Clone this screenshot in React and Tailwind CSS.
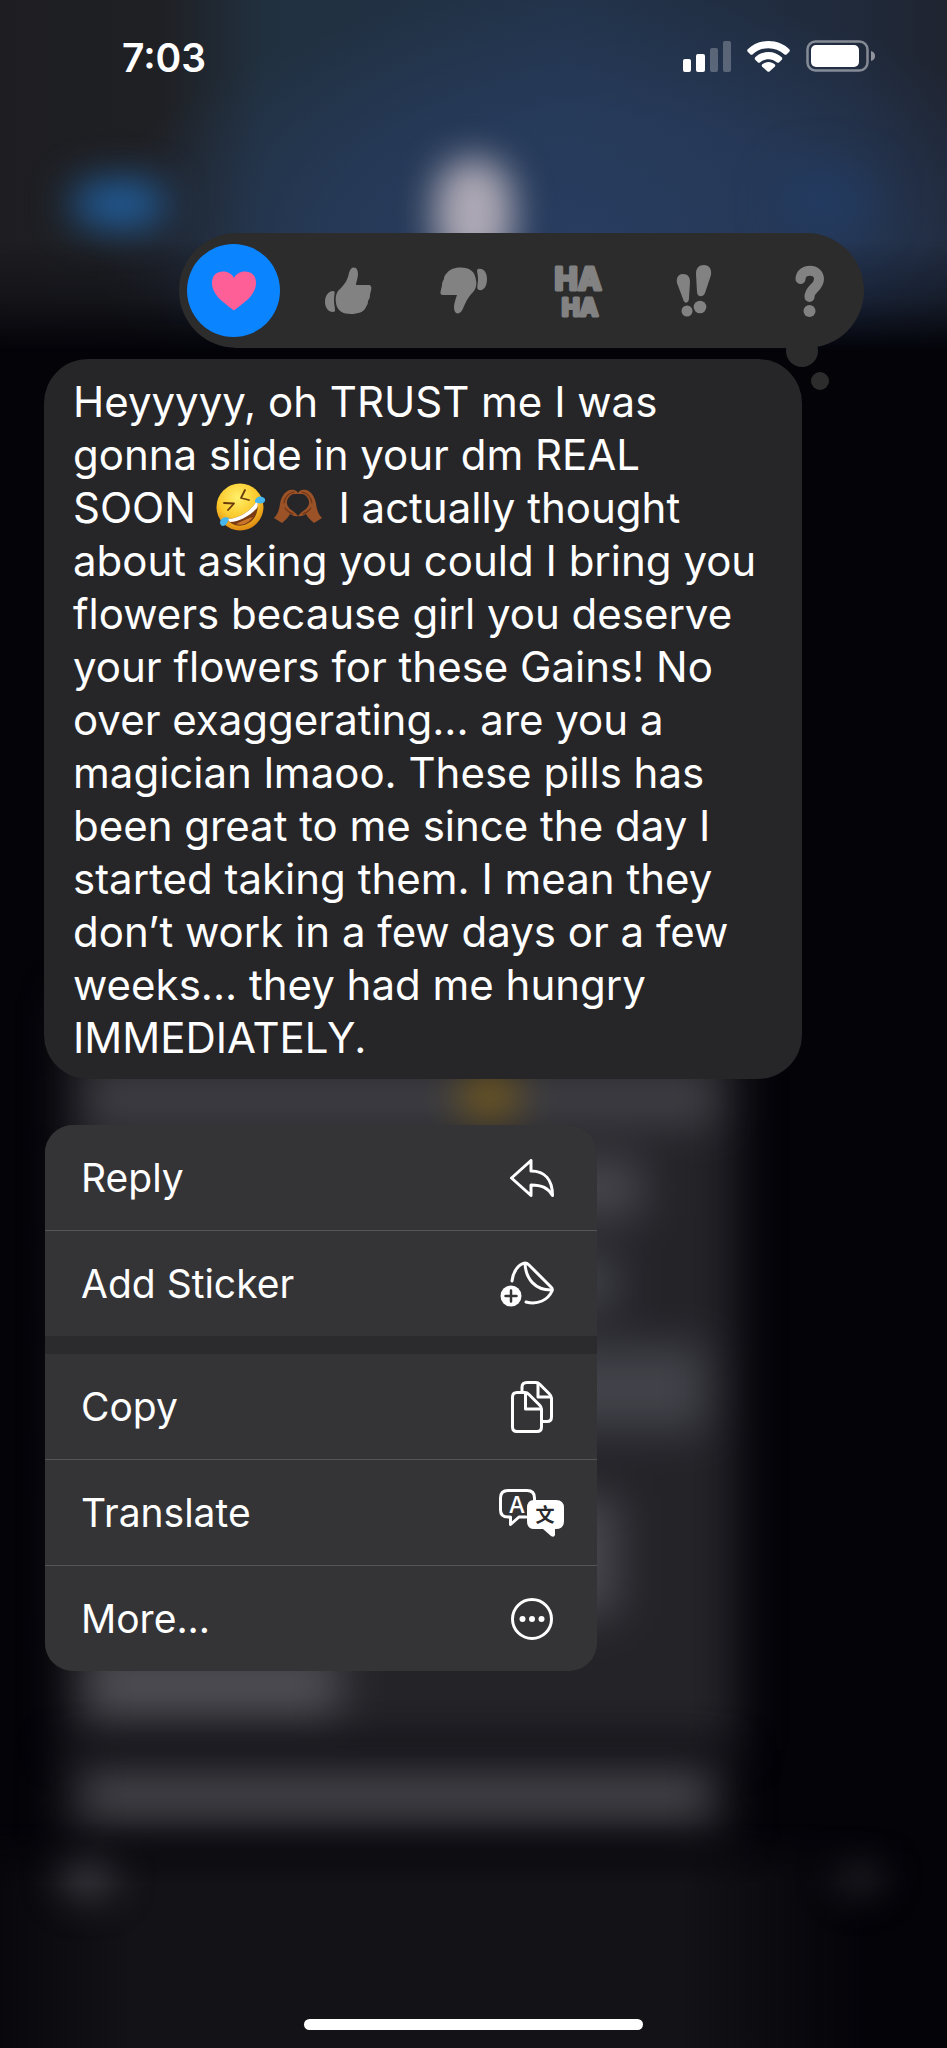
import React, { useState } from "react";

const LaughEmoji = () => (
  <svg viewBox="0 0 50 50" role="img" aria-label="rolling on the floor laughing" className="ml-2 inline-block size-[50px] align-[-9px]">
    <defs>
      <radialGradient id="face" cx="0.45" cy="0.3" r="0.75">
        <stop offset="0" stopColor="#fff06a" />
        <stop offset="0.55" stopColor="#fbc92c" />
        <stop offset="1" stopColor="#d97f0c" />
      </radialGradient>
    </defs>
    <circle cx="24" cy="25" r="23.5" fill="url(#face)" />
    <path d="M8 21 L18 21.5 L12 28" fill="none" stroke="#6b3a0a" strokeWidth="1.8" strokeLinecap="round" strokeLinejoin="round" />
    <path d="M29 8 L25 16 L33 18" fill="none" stroke="#6b3a0a" strokeWidth="1.8" strokeLinecap="round" strokeLinejoin="round" />
    <path d="M11 37 C22 37 34 30 41 19 C44 31 37 41 28 43 C21 45 14 42 11 37Z" fill="#7a3a12" />
    <path d="M11 37 C22 37 34 30 41 19 C42 22 42 24 41 26 C34 34 23 40 14 40Z" fill="#fff" />
    <path d="M20 42 C26 39 33 36 37 35 C32 42 25 44 20 42Z" fill="#c9762a" />
    <path d="M39 18 C42 13 47 14 49 17 C50 21 45 23 39 20Z" fill="#45b6ee" />
    <path d="M13 36 C8 34 4 37 4 41 C5 46 11 45 13 36Z" fill="#45b6ee" />
  </svg>
);

const HeartHandsEmoji = () => (
  <svg viewBox="0 0 50 50" role="img" aria-label="heart hands" className="mr-1 ml-[7px] inline-block size-[50px] align-[-9px]">
    {[false, true].map((flip) => (
      <g key={String(flip)} transform={flip ? "translate(50 0) scale(-1 1)" : undefined}>
        <path
          d="M1 36 C5 32 6 28 7 22 C8 15 12 9 17 8 C21 7 25 9 25 12 C22 12 19 11 16 15 C13 19 13 23 17 27 C20 29 23 31 25 34 C22 35 19 33 17 32 C15 36 12 38 9 41Z"
          fill="#9b5227"
        />
        <path d="M11 21 C12 15 16 11 21 10 M12 26 C14 29 17 31 20 32" fill="none" stroke="#6e3415" strokeWidth="1.2" strokeLinecap="round" />
      </g>
    ))}
  </svg>
);

const HeartIcon = () => (
  <svg viewBox="0 0 44 40" className="h-10 w-11" fill="#ff5f97">
    <path d="M22 39.5 C14 33 0 25 0 12 C0 4 5 0.5 11 0.5 C16 0.5 20 3 22 7 C24 3 28 0.5 33 0.5 C39 0.5 44 4 44 12 C44 25 30 33 22 39.5Z" />
  </svg>
);

const ThumbUpIcon = () => (
  <svg viewBox="0 0 47 47" className="size-[47px]" fill="currentColor">
    <path d="M11 36 C10 31 11 27 13 24 C17 20 21 16 23 10 C24 6 25 1 28 0.5 C32 0 33 4 33 7 C33 11 31 15 31 18 L43 18 C46 18 47 20 46 23 C46 25 45 26 45 28 C45 31 44 32 43 34 C43 37 42 38 41 40 C39 45 33 47 26 47 C18 47 12 44 11 36Z" />
    <path d="M8 24 C11 24 9 27 9 33 C9 41 12 45 8 45 C3 45 0 40 0 35 C0 28 4 24 8 24Z" />
  </svg>
);

const ThumbDownIcon = () => (
  <svg viewBox="0 0 47 47" className="size-[47px]" fill="currentColor">
    <path d="M36 13 C37 17 36 21 34 24 C30 28 27 32 25 37 C23 41 22 46 18 46.500 C15 46.500 14 43 14 40 C14 36 16 31 17 28 L4 28 C0 28 0 26 1 23 C1 21 2 20 2 18 C2 15 3 14 4 12 C4 9 5 8 7 6 C10 2 15 0.500 21 0.500 C29 0.500 35 4 36 13Z" />
    <path d="M38 2 C44 1 47 6 47 12 C47 19 44 24 39 23 C36 22 38 18 38 12 C38 6 36 3 38 2Z" />
  </svg>
);

const HahaIcon = () => (
  <svg
    viewBox="0 0 64 64"
    className="size-16 font-['Inter',sans-serif] font-extrabold"
    fill="currentColor"
    stroke="currentColor"
    strokeLinejoin="round"
    textAnchor="middle"
  >
    <text x="31" y="31" fontSize="31" strokeWidth="3">HA</text>
    <text x="33" y="57" fontSize="24" strokeWidth="3">HA</text>
  </svg>
);

const EmphasizeIcon = () => (
  <svg viewBox="0 0 36 52" className="h-[52px] w-9" fill="currentColor">
    <path d="M1 18 C0 12 3 9 7 9 C12 9 14 12 14 17 L13 33 C13 39 8 39 7 34Z" />
    <path d="M20 9 C20 3 23 0 28 0 C33 0 36 4 35 10 L29 28 C27 33 21 32 21 27Z" />
    <circle cx="11" cy="46" r="5.500" />
    <circle cx="24" cy="42" r="6.300" />
  </svg>
);

const QuestionIcon = () => (
  <svg viewBox="0 0 30 52" className="h-[52px] w-[30px]" fill="currentColor">
    <path d="M6.500 14 C7 3 25 3 25 14 C25 23 15.500 23 15.500 32" fill="none" stroke="currentColor" strokeWidth="10" strokeLinecap="round" />
    <circle cx="15.500" cy="46" r="6" />
  </svg>
);

const ReplyIcon = () => (
  <svg viewBox="0 0 44 38" className="h-[38px] w-11" fill="none" stroke="currentColor" strokeWidth="3" strokeLinejoin="round">
    <path d="M1.500 19 L21 1.500 V12 C35 12 42.500 21 42.500 36.500 C38 29 32 26 21 26 V36.500Z" />
  </svg>
);

const StickerIcon = () => (
  <svg viewBox="0 0 66 46" className="h-[46px] w-[66px]" fill="none" stroke="currentColor" strokeWidth="3" strokeLinecap="round" strokeLinejoin="round">
    <path d="M13 20 C14 10 20 3 26 2 Q28 2 30 4 L52 26 Q54 28 53 30 C49 39 39 44 27 41" />
    <path d="M26 3 C27 18 36 29 52 29" />
    <circle cx="12" cy="35" r="10.500" fill="currentColor" stroke="none" />
    <path d="M12 29.500 V40.500 M6.500 35 H17.500" stroke="#343437" strokeWidth="2.500" />
  </svg>
);

const CopyIcon = () => (
  <svg viewBox="0 0 42 52" className="h-[52px] w-[42px]" fill="none" stroke="currentColor" strokeWidth="3" strokeLinejoin="round">
    <path d="M11 11 V6 Q11 1.500 16 1.500 H25 Q27 1.500 29 3.500 L38 12.500 Q40.500 15 40.500 17 V36 Q40.500 40.500 36 40.500 H32" />
    <path d="M27 3 V16 H40" />
    <path d="M6 11.500 H14 Q16 11.500 18 13.500 L28.500 24 Q30.500 26 30.500 28 V46 Q30.500 50.500 26 50.500 H6 Q1.500 50.500 1.500 46 V16 Q1.500 11.500 6 11.500Z" />
    <path d="M14.500 12 V28 H30" />
  </svg>
);

const TranslateIcon = () => (
  <svg viewBox="0 0 66 48" className="h-12 w-[66px]" fill="none" stroke="currentColor" strokeWidth="3" strokeLinejoin="round" strokeLinecap="round">
    <path d="M27 28 H20 L11.500 35.500 V28 H9 Q1.500 28 1.500 21 V9 Q1.500 1.500 9 1.500 H28 Q35.500 1.500 35.500 9 V11" />
    <text x="18" y="24" fontSize="23" textAnchor="middle" fill="currentColor" stroke="none" className="font-['Inter',sans-serif] font-medium">A</text>
    <path d="M35 11 H57 Q65 11 65 19 V32 Q65 40 57 40 H56 V46 Q55 49 52 47 L44 40 H35 Q28 40 28 32 V19 Q28 11 35 11Z" fill="currentColor" stroke="none" />
    <text x="46" y="33" fontSize="19" textAnchor="middle" fill="#29292c" stroke="none" className="font-['Noto_Sans_CJK_SC',sans-serif] font-bold">文</text>
  </svg>
);

const MoreIcon = () => (
  <svg viewBox="0 0 42 42" className="size-[42px]" fill="currentColor">
    <circle cx="21" cy="21" r="19.500" fill="none" stroke="currentColor" strokeWidth="3" />
    <circle cx="11.500" cy="21" r="3" />
    <circle cx="21" cy="21" r="3" />
    <circle cx="30.500" cy="21" r="3" />
  </svg>
);

const reactions = [
  { id: "love", label: "Love", Icon: HeartIcon },
  { id: "like", label: "Like", Icon: ThumbUpIcon },
  { id: "dislike", label: "Dislike", Icon: ThumbDownIcon },
  { id: "laugh", label: "Laugh", Icon: HahaIcon },
  { id: "emphasize", label: "Emphasize", Icon: EmphasizeIcon },
  { id: "question", label: "Question", Icon: QuestionIcon },
];

const menuGroups = [
  [
    { label: "Reply", Icon: ReplyIcon },
    { label: "Add Sticker", Icon: StickerIcon },
  ],
  [
    { label: "Copy", Icon: CopyIcon },
    { label: "Translate", Icon: TranslateIcon },
    { label: "More...", Icon: MoreIcon },
  ],
];

const StatusBar = () => (
  <header className="flex h-28 items-center justify-between pr-[71px] pl-[122px]">
    <span className="pt-0.5 text-[39px] leading-none font-semibold">7:03</span>
    <div className="flex items-center gap-4">
      <svg viewBox="0 0 48 31" className="h-[31px] w-12" fill="currentColor">
        <rect x="0" y="18" width="8" height="13" rx="2" />
        <rect x="13" y="13" width="9" height="18" rx="2" />
        <rect x="27" y="7" width="8" height="24" rx="2" opacity="0.25" />
        <rect x="40" y="0" width="8" height="31" rx="2" opacity="0.25" />
      </svg>
      <svg viewBox="0 0 43 31" className="h-[31px] w-[43px]" fill="currentColor">
        <path d="M21.500 0 C30 0 37 3 42.500 8.500 Q43 9.500 42.500 10.500 L39.500 13.500 Q38.500 14 37.500 13.500 C28 5 15 5 5.500 13.500 Q4.500 14 3.500 13.500 L0.500 10.500 Q0 9.500 0.500 8.500 C6 3 13 0 21.500 0Z" />
        <path d="M21.500 11 C26.500 11 31.500 13 35 16.500 Q35.500 17.500 35 18.500 L32 21.500 Q31 22 30 21.500 C25 17 18 17 13 21.500 Q12 22 11 21.500 L8 18.500 Q7.500 17.500 8 16.500 C11.500 13 16.500 11 21.500 11Z" />
        <path d="M21.500 21 C24 21 26 22 28 23.500 Q28.500 24.500 28 25.500 L22.500 30.500 Q21.500 31 20.500 30.500 L15 25.500 Q14.500 24.500 15 23.500 C17 22 19 21 21.500 21Z" />
      </svg>
      <svg viewBox="0 0 70 32" className="h-8 w-[70px]" fill="currentColor">
        <rect x="1.500" y="1.500" width="60" height="29" rx="8" fill="none" stroke="currentColor" strokeWidth="2.500" opacity="0.45" />
        <rect x="5" y="5" width="48" height="22" rx="5" />
        <path d="M65 11 Q69 12 69 16 Q69 20 65 21Z" opacity="0.5" />
      </svg>
    </div>
  </header>
);

// Blurred conversation that stays behind the focused message
const Backdrop = () => (
  <div aria-hidden="true" className="absolute inset-0 flex flex-col overflow-hidden">
    <div className="h-[400px] bg-[radial-gradient(ellipse_52%_62%_at_62%_60%,#293f65cc_0%,#293f6599_50%,transparent_100%),linear-gradient(to_right,#1e1e22_0%,#1f2024_17%,#21303f_28%,#22334a_60%,#202a3b_90%,#1f2430_100%)] mask-[linear-gradient(to_bottom,black_60%,#000a_74%,transparent_88%)]">
      <div className="flex h-[300px] items-end justify-between px-[73px] pb-[30px]">
        <div className="mb-[44px] h-11 w-[92px] rounded-full bg-[#2163a5] blur-[20px]" />
        <div className="h-[112px] w-[78px] rounded-full bg-[#aea9b5] blur-[18px]" />
        <div className="mb-[40px] h-[60px] w-[92px] rounded-full bg-[#1f406c99] blur-[24px]" />
      </div>
    </div>
    <div className="mt-[600px] ml-[66px] flex h-[750px] w-[71%] flex-col items-start bg-[#232328] px-5 pt-[76px] blur-[22px]">
      <div className="flex h-[46px] w-full justify-center bg-[#424248] pl-[174px]">
        <div className="h-10 w-12 bg-[#8c6a18]" />
      </div>
      <div className="mt-9 h-[60px] w-[88%] bg-[#46464c]" />
      <div className="mt-9 h-14 w-[84%] bg-[#42424a]" />
      <div className="mt-9 h-[84px] w-[98%] bg-[#42424a]" />
      <div className="mt-[66px] h-[120px] w-[84%] bg-[#48484e]" />
      <div className="mt-[38px] h-[60px] w-[40%] bg-[#505056]" />
    </div>
    <div className="ml-[60px] flex h-[90px] w-[71%] items-center bg-[#1b1b20] px-6 blur-[20px]">
      <div className="h-11 w-full bg-[#45454b]" />
    </div>
    <div className="-mt-4 flex flex-1 items-start justify-between bg-[linear-gradient(to_right,#08080c,#131317_14%,#131317_72%,transparent_92%)] px-[60px] pt-[20px] mask-[linear-gradient(to_bottom,transparent,black_60px)]">
      <div className="size-14 rounded-full bg-[#38383e] blur-[18px]" />
      <div className="size-14 rounded-full bg-[#18181d] blur-[16px]" />
    </div>
  </div>
);

const ReactionBar = () => {
  const [selected, setSelected] = useState("love");

  return (
    <div className="relative z-10 mt-[121px] mr-[83px] flex h-[115px] w-[685px] max-w-[calc(100%-83px)] items-center justify-between self-end rounded-full bg-[#2c2c2d] px-2">
      {reactions.map(({ id, label, Icon }) => (
        <button
          key={id}
          type="button"
          aria-label={label}
          aria-pressed={selected === id}
          onClick={() => setSelected(id)}
          className={`flex size-[93px] items-center justify-center rounded-full text-[#828283] ${
            selected === id ? "bg-[#0a84ff]" : ""
          }`}
        >
          <Icon />
        </button>
      ))}
      {/* Thought bubble tail */}
      <span className="absolute right-[46px] -bottom-[19px] -z-10 size-8 rounded-full bg-[#2c2c2d]" />
      <span className="absolute right-[35px] -bottom-[42px] size-[18px] rounded-full bg-[#2c2c2d]" />
    </div>
  );
};

const ContextMenu = () => (
  <nav className="mt-[46px] ml-[45px] flex w-[552px] max-w-[90%] flex-col gap-[18px] overflow-hidden rounded-[28px] bg-[#2b2b2d]">
    {menuGroups.map((group, index) => (
      <ul key={index} className="divide-y divide-[#555558] bg-[#343437]">
        {group.map(({ label, Icon }) => (
          <li key={label}>
            <button type="button" className="flex h-[105px] w-full items-center justify-between pr-8 pl-9 text-[39px] leading-none">
              <span>{label}</span>
              <span className="flex w-[66px] justify-center">
                <Icon />
              </span>
            </button>
          </li>
        ))}
      </ul>
    ))}
  </nav>
);

export default function App() {
  return (
    <div className="relative min-h-screen bg-[#030308] font-['Inter',sans-serif] text-white">
      <Backdrop />
      <main className="relative flex min-h-screen flex-col">
        <StatusBar />
        <ReactionBar />
        <article className="mt-[11px] ml-11 w-4/5 rounded-[44px] bg-[#262629] pt-4 pr-6 pb-[15px] pl-[29px] text-[42px] leading-[53px]">
          Heyyyyy, oh TRUST me I was
          <br />
          gonna slide in your dm REAL
          <br />
          SOON <LaughEmoji />
          <HeartHandsEmoji /> I actually thought
          <br />
          about asking you could I bring you
          <br />
          flowers because girl you deserve
          <br />
          your flowers for these Gains! No
          <br />
          over exaggerating... are you a
          <br />
          magician lmaoo. These pills has
          <br />
          been great to me since the day I
          <br />
          started taking them. I mean they
          <br />
          don’t work in a few days or a few
          <br />
          weeks... they had me hungry
          <br />
          IMMEDIATELY.
        </article>
        <ContextMenu />
        <div className="mt-auto mb-[18px] h-[11px] w-[339px] self-center rounded-full bg-white" />
      </main>
    </div>
  );
}
